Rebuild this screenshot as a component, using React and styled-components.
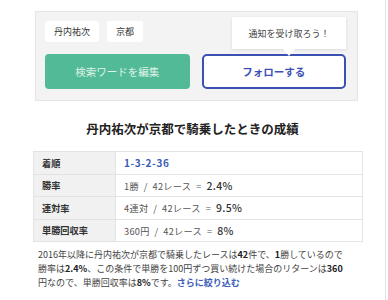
import React from 'react';
import styled, {createGlobalStyle} from 'styled-components';

const GlobalStyle = createGlobalStyle`
  body {
    margin: 0;
    background: #fff;
    font-family: "Noto Sans CJK JP", "Noto Sans", sans-serif;
    color: #333;
  }
`;

const App = () => {
  const rows = [
    {label: '着順', value: <Order>1-3-2-36</Order>},
    {label: '勝率', value: <>1勝 / 42レース = <Em>2.4%</Em></>},
    {label: '連対率', value: <>4連対 / 42レース = <Em>9.5%</Em></>},
    {label: '単勝回収率', value: <>360円 / 42レース = <Em>8%</Em></>},
  ];

  return (
    <Page>
      <GlobalStyle/>
      <SearchBox>
        <Tags>
          <Tag>丹内祐次</Tag>
          <Tag>京都</Tag>
        </Tags>
        <Buttons>
          <EditButton>検索ワードを編集</EditButton>
          <FollowWrap>
            <Tooltip>通知を受け取ろう！</Tooltip>
            <FollowButton>フォローする</FollowButton>
          </FollowWrap>
        </Buttons>
      </SearchBox>

      <Title>丹内祐次が京都で騎乗したときの成績</Title>

      <Table>
        <tbody>
          {rows.map((row) => (
            <tr key={row.label}>
              <Th>{row.label}</Th>
              <Td>{row.value}</Td>
            </tr>
          ))}
        </tbody>
      </Table>

      <Summary>
        2016年以降に丹内祐次が京都で騎乗したレースは<b>42</b>件で、<b>1</b>勝しているので勝率は<b>2.4%</b>、この条件で単勝を100円ずつ買い続けた場合のリターンは<b>360</b>円なので、単勝回収率は<b>8%</b>です。<MoreLink>さらに絞り込む</MoreLink>
      </Summary>

      <SubTitle>全場・すべての成績</SubTitle>
    </Page>
  );
};

export default App;

const Page = styled.div`
  width: 386px;
  height: 300px;
  overflow: hidden;
  border-right: 1px solid #e4e4e4;
  padding-top: 11px;
  box-sizing: border-box;
`;

const SearchBox = styled.div`
  margin: 0 27px 0 35px;
  padding: 9px 11px 11px 9px;
  background: #f3f3f3;
  border: 1px solid #e6e6e6;
`;

const Tags = styled.div`
  display: flex;
  gap: 8px;
`;

const Tag = styled.span`
  background: #fff;
  border-radius: 3px;
  padding: 0 9px;
  height: 21px;
  line-height: 21px;
  font-size: 9px;
  color: #333;
`;

const Buttons = styled.div`
  display: grid;
  grid-template-columns: 1fr 1fr;
  gap: 12px;
  margin-top: 12px;
`;

const EditButton = styled.div`
  height: 35px;
  border-radius: 4px;
  background: #52ba96;
  color: #dff3ea;
  font-size: 10.5px;
  display: flex;
  align-items: center;
  justify-content: center;
`;

const FollowWrap = styled.div`
  position: relative;
`;

const FollowButton = styled.div`
  height: 35px;
  box-sizing: border-box;
  border: 2px solid #3a51b3;
  border-radius: 5px;
  background: #fff;
  color: #3a51b3;
  font-size: 10.5px;
  font-weight: bold;
  display: flex;
  align-items: center;
  justify-content: center;
`;

const Tooltip = styled.div`
  position: absolute;
  right: 0;
  top: -37px;
  width: 114px;
  height: 32px;
  background: #fff;
  box-shadow: 0 1px 3px rgba(0, 0, 0, 0.1);
  font-size: 9px;
  color: #444;
  display: flex;
  align-items: center;
  justify-content: center;
  z-index: 2;

  &::after {
    content: '';
    position: absolute;
    left: 51px;
    bottom: -7px;
    border-left: 6px solid transparent;
    border-right: 6px solid transparent;
    border-top: 7px solid #fff;
  }
`;

const Title = styled.h2`
  margin: 19px 0 0;
  text-align: center;
  font-size: 12.5px;
  font-weight: bold;
  color: #222;
  line-height: 18px;
`;

const Table = styled.table`
  margin: 13px 0 0 33px;
  width: 330px;
  border-collapse: collapse;
  font-size: 9.2px;
`;

const Th = styled.th`
  width: 82px;
  height: 21.5px;
  padding: 0 0 0 8px;
  box-sizing: border-box;
  text-align: left;
  background: #f1f1f1;
  border: 1px solid #e3e3e3;
  color: #333;
  font-weight: bold;
`;

const Td = styled.td`
  height: 21.5px;
  padding: 0 0 0 8px;
  border: 1px solid #e3e3e3;
  color: #555;
  word-spacing: 2.5px;
  letter-spacing: 0.3px;
`;

const Order = styled.span`
  color: #3b5cb8;
  font-weight: bold;
  font-size: 10px;
  letter-spacing: 0.6px;
`;

const Em = styled.span`
  color: #333;
  font-size: 10.5px;
  font-weight: 500;
`;

const Summary = styled.p`
  margin: 6px 0 0 38px;
  width: 310px;
  font-size: 9px;
  line-height: 14px;
  color: #444;

  b {
    color: #222;
  }
`;

const MoreLink = styled.a`
  color: #3b5cb8;
  font-weight: bold;
`;

const SubTitle = styled.h3`
  margin: 10px 0 0;
  text-align: center;
  font-size: 12px;
  font-weight: bold;
  color: #333;
`;
